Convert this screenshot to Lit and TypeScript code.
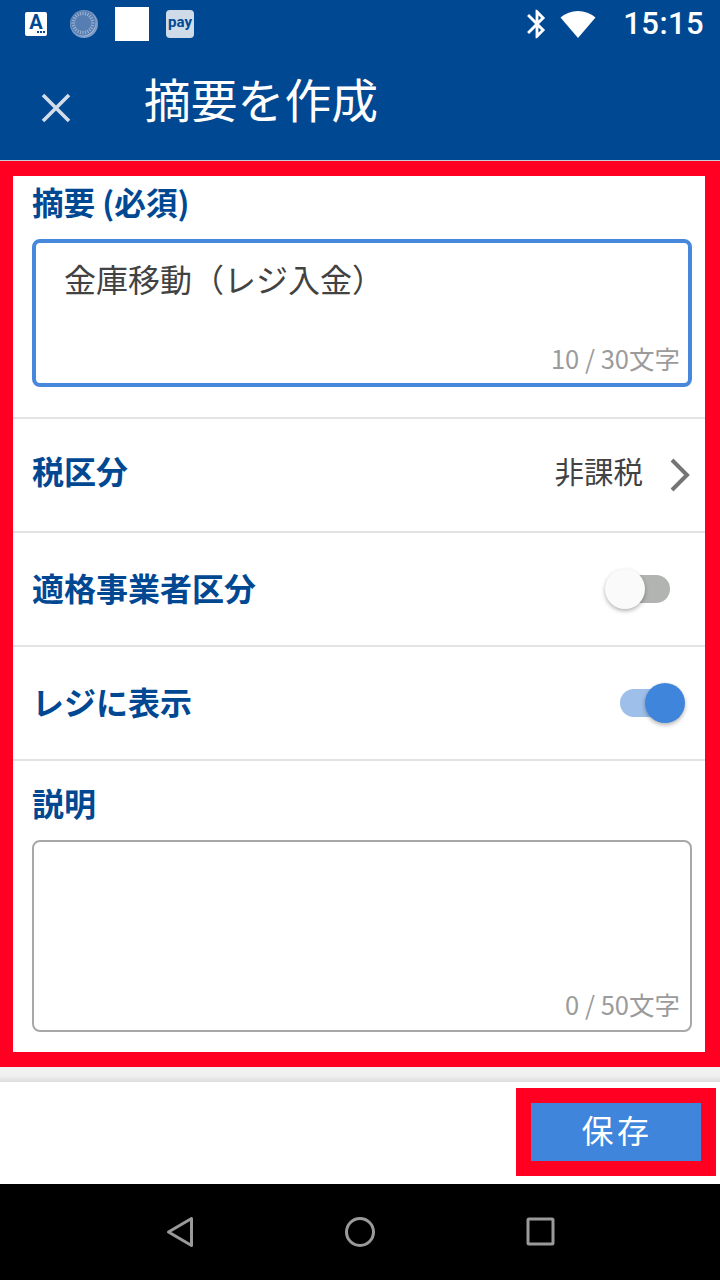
import { LitElement, css, html, svg } from 'lit';
import { customElement } from 'lit/decorators.js';

const ticks = Array.from({ length: 24 }, (_, i) => (i * 360) / 24);

@customElement('app-root')
export class AppRoot extends LitElement {
  static styles = css`
    :host {
      display: block;
      width: 720px;
      height: 1280px;
      background: #fff;
      font-family: 'Noto Sans CJK JP', 'Noto Sans', sans-serif;
      overflow: hidden;
    }
    .page {
      display: flex;
      flex-direction: column;
      height: 1280px;
    }
    svg {
      display: block;
      flex: none;
    }

    /* status bar */
    .status {
      height: 48px;
      background: #014893;
      display: flex;
      align-items: center;
      padding: 0 16px 0 25px;
      flex: none;
    }
    .badge-a {
      width: 22px;
      height: 24px;
      background: #fff;
      border-radius: 2px;
      color: #014893;
      font: 700 20px/18px Roboto, sans-serif;
      text-align: center;
      padding-top: 1px;
      box-sizing: border-box;
    }
    .dots {
      display: flex;
      justify-content: flex-end;
      gap: 1px;
      padding-right: 2px;
    }
    .dots i {
      width: 2px;
      height: 2px;
      background: #014893;
    }
    .dial {
      margin-left: 23px;
    }
    .blank {
      width: 34px;
      height: 34px;
      background: #fff;
      margin-left: 17px;
    }
    .badge-pay {
      width: 28px;
      height: 28px;
      margin-left: 17px;
      background: #d0dbe9;
      border-radius: 4px;
      color: #014893;
      font: 700 15px/25px Roboto, sans-serif;
      text-align: center;
    }
    .spacer {
      flex: 1;
    }
    .wifi {
      margin-left: 6px;
    }
    .time {
      margin-left: 27px;
      color: #fff;
      font: 500 31px/48px Roboto, sans-serif;
      letter-spacing: 0.4px;
    }

    /* app bar */
    .bar {
      height: 112px;
      background: #014893;
      border-bottom: 1px solid #c9ced3;
      display: flex;
      align-items: center;
      flex: none;
    }
    .close {
      margin-left: 40px;
      margin-top: 8px;
    }
    .bar h1 {
      margin: 0 0 12px 72px;
      color: #fff;
      font-size: 46.8px;
      font-weight: 400;
      line-height: 64px;
    }

    /* form, the red frame is part of the reference */
    .form {
      border: solid #ff0022;
      border-width: 15px 15px 15px 13px;
      height: 906px;
      box-sizing: border-box;
      flex: none;
    }
    .section {
      padding: 0 13px 0 19px;
      border-bottom: 2px solid #e3e3e3;
    }
    .section.first {
      height: 243px;
      box-sizing: border-box;
    }
    .section.last {
      border-bottom: 0;
    }
    .label {
      color: #014893;
      font-size: 32px;
      font-weight: 700;
      line-height: 46px;
    }
    .section.first .label {
      padding-top: 2px;
      height: 63px;
      box-sizing: border-box;
      font-size: 31.6px;
    }
    .section.last .label {
      padding-top: 18px;
      height: 79px;
      box-sizing: border-box;
    }
    .field {
      box-sizing: border-box;
      border-radius: 8px;
      display: flex;
      flex-direction: column;
      justify-content: space-between;
    }
    .field.focus {
      height: 148px;
      border: 4px solid #4788dc;
      padding: 12px 8px 6px 28px;
    }
    .field.plain {
      height: 192px;
      border: 2px solid #a8a8a8;
      padding: 0 10px 7px;
    }
    .value {
      color: #424242;
      font-size: 32px;
      line-height: 46px;
    }
    .count {
      color: #9b9b9b;
      font-size: 25.5px;
      line-height: 38px;
      text-align: right;
    }
    .row {
      height: 112px;
      display: flex;
      align-items: center;
      justify-content: space-between;
      padding: 0 14px 0 19px;
      border-bottom: 2px solid #e3e3e3;
    }
    .row .label {
      margin-top: -4px;
    }
    .row.tax .label {
      margin-top: -10px;
    }
    .select {
      display: flex;
      align-items: center;
      gap: 26px;
      color: #424242;
      font-size: 29.5px;
      line-height: 46px;
    }
    .select span {
      margin-top: -10px;
    }

    /* switch */
    .switch {
      width: 80px;
      height: 40px;
      margin-right: 6px;
      display: flex;
      align-items: center;
    }
    .switch.off {
      justify-content: flex-start;
    }
    .switch.on {
      justify-content: flex-end;
    }
    .switch i {
      display: block;
      width: 50px;
      height: 28px;
      border-radius: 14px;
      flex: none;
    }
    .switch b {
      display: block;
      width: 40px;
      height: 40px;
      border-radius: 50%;
      flex: none;
      position: relative;
      box-shadow: 0 2px 4px rgba(0, 0, 0, 0.3);
    }
    .switch.off i {
      background: #b2b4b2;
      margin-left: -25px;
    }
    .switch.off b {
      background: #fafafa;
      z-index: 1;
    }
    .switch.on i {
      background: #9dbfea;
      margin-right: -25px;
    }
    .switch.on b {
      background: #3f85dc;
    }

    /* footer */
    .band {
      height: 15px;
      flex: none;
      background: linear-gradient(#f2f2f2, #f0f0f0 60%, #dcdcdc);
    }
    .footer {
      height: 102px;
      flex: none;
      display: flex;
      justify-content: flex-end;
      padding: 6px 4px 0 0;
      box-sizing: border-box;
    }
    .save {
      width: 200px;
      height: 88px;
      box-sizing: border-box;
      border: 15px solid #ff0022;
      background: #3f85dc;
      color: #fff;
      font-size: 32px;
      letter-spacing: 3.5px;
      line-height: 52px;
      padding-left: 2px;
      text-align: center;
    }

    /* android nav */
    .nav {
      flex: 1;
      background: #000;
      display: flex;
      align-items: flex-start;
      padding: 32px 0 0 166px;
    }
    .nav .circle {
      margin-left: 149px;
    }
    .nav .square {
      margin-left: 150px;
    }
  `;

  private dial() {
    return html`<svg class="dial" width="28" height="28" viewBox="0 0 28 28">
      <circle cx="14" cy="14" r="14" fill="#7d9bc4" />
      <circle cx="13" cy="13" r="12.5" fill="#567eb3" />
      ${ticks.map(
        (a) => svg`<line x1="13" y1="1.5" x2="13" y2="5" stroke="#9db3d2" stroke-width="1.1"
          transform="rotate(${a} 13 13)" />`,
      )}
      <path d="M25.5 12A12.5 12.5 0 0 1 9 25.5 13 13 0 0 0 25.5 12Z" fill="#e4ebf4" />
    </svg>`;
  }

  render() {
    return html`
      <div class="page">
        <div class="status">
          <div class="badge-a">A<div class="dots"><i></i><i></i><i></i></div></div>
          ${this.dial()}
          <div class="blank"></div>
          <div class="badge-pay">pay</div>
          <div class="spacer"></div>
          <svg width="34" height="34" viewBox="0 0 24 24" fill="#fff">
            <path
              d="M17.71 7.71L12 2h-1v7.59L6.41 5 5 6.41 10.59 12 5 17.59 6.41 19 11 14.41V22h1l5.71-5.71-4.3-4.29 4.3-4.29zM13 5.83l1.88 1.88L13 9.59V5.83zm1.88 10.46L13 18.17v-3.76l1.88 1.88z"
            />
          </svg>
          <svg class="wifi" width="36" height="28" viewBox="0 0 36 28" fill="#fff">
            <path d="M18 28 L.5 7.5 A27 27 0 0 1 35.5 7.5 Z" />
          </svg>
          <div class="time">15:15</div>
        </div>

        <div class="bar">
          <svg class="close" width="32" height="32" viewBox="0 0 32 32">
            <path d="M3 3 L29 29 M29 3 L3 29" stroke="#d3dde9" stroke-width="3.6" fill="none" />
          </svg>
          <h1>摘要を作成</h1>
        </div>

        <div class="form">
          <div class="section first">
            <div class="label">摘要 (必須)</div>
            <div class="field focus">
              <div class="value">金庫移動（レジ入金）</div>
              <div class="count">10 / 30文字</div>
            </div>
          </div>
          <div class="row tax">
            <div class="label">税区分</div>
            <div class="select">
              <span>非課税</span>
              <svg width="22" height="34" viewBox="0 0 22 34">
                <path d="M3 2 L18 17 L3 32" stroke="#757575" stroke-width="4" fill="none" />
              </svg>
            </div>
          </div>
          <div class="row">
            <div class="label">適格事業者区分</div>
            <div class="switch off"><b></b><i></i></div>
          </div>
          <div class="row">
            <div class="label">レジに表示</div>
            <div class="switch on"><i></i><b></b></div>
          </div>
          <div class="section last">
            <div class="label">説明</div>
            <div class="field plain">
              <div></div>
              <div class="count">0 / 50文字</div>
            </div>
          </div>
        </div>

        <div class="band"></div>
        <div class="footer">
          <div class="save">保存</div>
        </div>

        <div class="nav">
          <svg width="30" height="32" viewBox="0 0 30 32" fill="none" stroke="#9a9a9a" stroke-width="3" stroke-linejoin="round">
            <path d="M2.5 16 L25.5 2.5 V29.5 Z" />
          </svg>
          <svg class="circle" width="30" height="32" viewBox="0 0 30 32" fill="none" stroke="#9a9a9a" stroke-width="3">
            <circle cx="15" cy="16" r="13.5" />
          </svg>
          <svg class="square" width="30" height="32" viewBox="0 0 30 32" fill="none" stroke="#9a9a9a" stroke-width="3" stroke-linejoin="round">
            <rect x="3" y="3" width="25" height="25" rx="1" />
          </svg>
        </div>
      </div>
    `;
  }
}

declare global {
  interface HTMLElementTagNameMap {
    'app-root': AppRoot;
  }
}
